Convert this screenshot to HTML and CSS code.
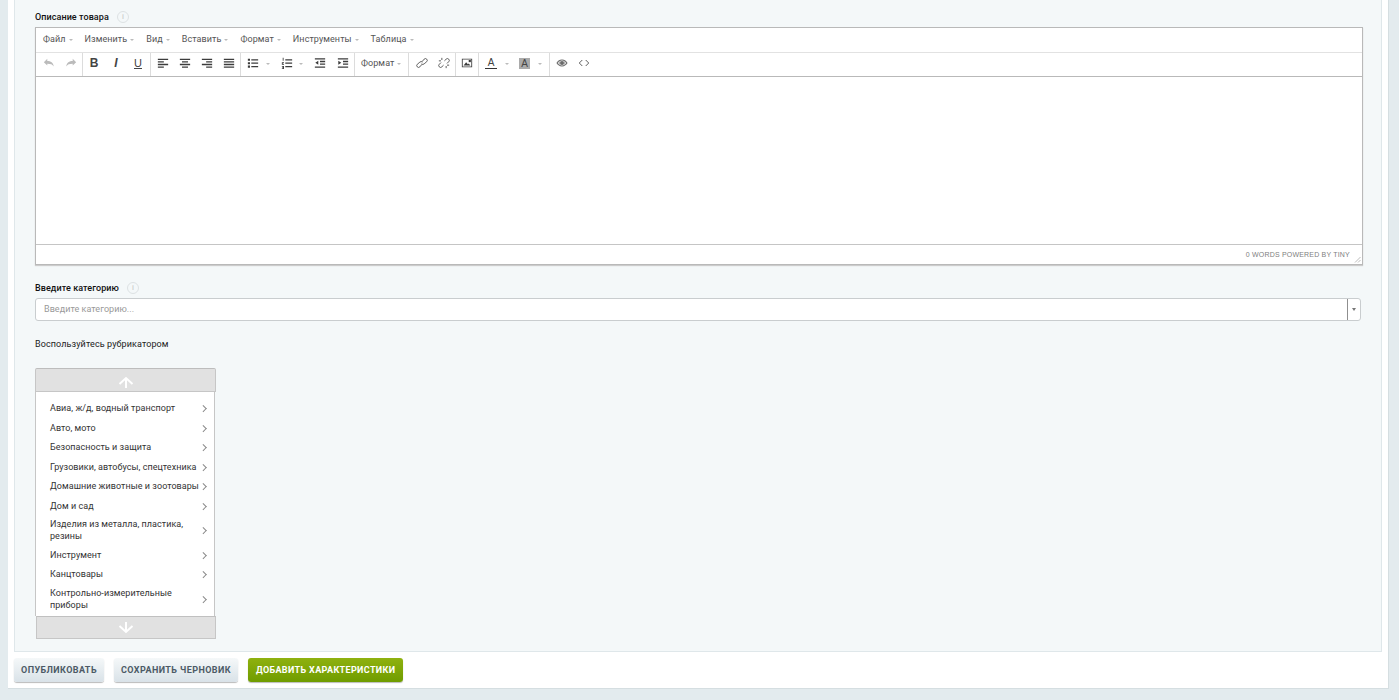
FILE: index.html
```html
<!DOCTYPE html>
<html lang="ru">
<head>
<meta charset="utf-8">
<title>Описание товара</title>
<link rel="stylesheet" href="styles.css">
</head>
<body>
<div class="sheet">
  <main class="panel">
    <div class="label-row first"><label class="label">Описание товара</label><span class="info">i</span></div>
    <div class="editor">
      <nav class="menubar">
        <span class="menu">Файл<i class="caret"></i></span>
        <span class="menu">Изменить<i class="caret"></i></span>
        <span class="menu">Вид<i class="caret"></i></span>
        <span class="menu">Вставить<i class="caret"></i></span>
        <span class="menu">Формат<i class="caret"></i></span>
        <span class="menu">Инструменты<i class="caret"></i></span>
        <span class="menu">Таблица<i class="caret"></i></span>
      </nav>
      <div class="toolbar">
        <div class="group g1">
          <svg class="ico dim" viewBox="0 0 14 14"><path d="M1 6l4-4v2.600c4 0 7 1.600 7.500 6.400-1.400-2.400-3.500-3.200-7.500-3.200V10z"/></svg>
          <svg class="ico dim" viewBox="0 0 14 14"><path d="M13 6L9 2v2.600C5 4.600 2 6.200 1.500 11c1.400-2.400 3.500-3.200 7.500-3.200V10z"/></svg>
        </div>
        <div class="group g2">
          <span class="tb bold">B</span>
          <span class="tb ital">I</span>
          <span class="tb under">U</span>
        </div>
        <div class="group g3">
          <svg class="ico" viewBox="0 0 14 14"><path d="M1 2h12v1.500H1zM1 5h7v1.500H1zM1 8h12v1.500H1zM1 11h7v1.500H1z"/></svg>
          <svg class="ico" viewBox="0 0 14 14"><path d="M1 2h12v1.500H1zM3.500 5h7v1.500h-7zM1 8h12v1.500H1zM3.500 11h7v1.500h-7z"/></svg>
          <svg class="ico" viewBox="0 0 14 14"><path d="M1 2h12v1.500H1zM6 5h7v1.500H6zM1 8h12v1.500H1zM6 11h7v1.500H6z"/></svg>
          <svg class="ico" viewBox="0 0 14 14"><path d="M1 2h12v1.500H1zM1 5h12v1.500H1zM1 8h12v1.500H1zM1 11h12v1.500H1z"/></svg>
        </div>
        <div class="group g4">
          <svg class="ico" viewBox="0 0 14 14"><path d="M1 2h2.500v2.500H1zM1 6h2.500v2.500H1zM1 10h2.500v2.500H1zM5 2.500h8V4H5zM5 6.500h8V8H5zM5 10.500h8V12H5z"/></svg>
          <i class="caret tool"></i>
          <svg class="ico" viewBox="0 0 14 14"><path d="M2 1h1v3.500H2zM1 6h2.500v1H2v1h1.500v1H1zM1 10.500h2.500V14H1v-.8h1.500v-.5h-1v-.7h1v-.6H1zM5 2.500h8V4H5zM5 6.500h8V8H5zM5 10.500h8V12H5z"/></svg>
          <i class="caret tool"></i>
          <svg class="ico" viewBox="0 0 14 14"><path d="M1 1.500h12V3H1zM7 4.500h6V6H7zM7 7.500h6V9H7zM1 11h12v1.500H1zM5 4.500V9L1.500 6.750z"/></svg>
          <svg class="ico" viewBox="0 0 14 14"><path d="M1 1.500h12V3H1zM7 4.500h6V6H7zM7 7.500h6V9H7zM1 11h12v1.500H1zM1.500 4.500V9L5 6.750z"/></svg>
        </div>
        <div class="group g5"><span class="menu">Формат<i class="caret"></i></span></div>
        <div class="group g6">
          <svg class="ico line" viewBox="0 0 14 14"><path d="M7 5.500l2.500-3a2.100 2.100 0 0 1 3 3L9.500 8a2.100 2.100 0 0 1-3 0M7 8.500l-2.500 3a2.100 2.100 0 0 1-3-3L4.500 6a2.100 2.100 0 0 1 3 0"/></svg>
          <svg class="ico line" viewBox="0 0 14 14"><path d="M7.500 4.500l2-2a2.100 2.100 0 0 1 3 3l-2 2M6.500 9.500l-2 2a2.100 2.100 0 0 1-3-3l2-2M4.500 1v2.500M1 4.500h2.500M9.500 13v-2.500M13 9.500h-2.500"/></svg>
        </div>
        <div class="group g7">
          <svg class="ico" viewBox="0 0 14 14"><path fill-rule="evenodd" d="M1 2h12v10H1zM2 3v8h10V3zM3 10l3-4 2 2.500 1-1 2 2.500z"/><path d="M9 3.500h2.500V6H9z"/></svg>
        </div>
        <div class="group g8">
          <span class="tb color">A</span><i class="caret swatch"></i>
          <span class="tb back">A</span><i class="caret swatch"></i>
        </div>
        <div class="group g9">
          <svg class="ico soft" viewBox="0 0 14 14"><path fill-rule="evenodd" d="M7 3c3 0 5.500 2 6.500 4-1 2-3.500 4-6.500 4S1.500 9 .5 7C1.500 5 4 3 7 3zM7 4.200C4.800 4.200 3 5.400 2 7c1 1.600 2.800 2.800 5 2.800S11 8.600 12 7c-1-1.600-2.800-2.800-5-2.800z"/><path d="M3 5.500h8v1H3zM3 7.500h8v1H3z"/><circle cx="7" cy="7" r="2.200"/></svg>
          <svg class="ico line" viewBox="0 0 14 14"><path d="M5 3.500L1.500 7 5 10.500M9 3.500L12.500 7 9 10.500"/></svg>
        </div>
      </div>
      <div class="edit-area"></div>
      <footer class="statusbar">
        <span class="status">0 WORDS POWERED BY TINY</span>
        <svg class="grip" viewBox="0 0 8 8"><path d="M7.500 2L2 7.500M7.500 5L5 7.500"/></svg>
      </footer>
    </div>

    <div class="label-row second"><label class="label">Введите категорию</label><span class="info">i</span></div>
    <div class="combo">
      <input class="combo-input" type="text" placeholder="Введите категорию...">
      <span class="combo-btn"><i class="combo-caret"></i></span>
    </div>

    <p class="hint">Воспользуйтесь рубрикатором</p>

    <div class="rubric">
      <div class="scroll up">
        <svg viewBox="0 0 16 12" class="arrow"><path d="M1.500 8L8 2l6.500 6M8 2v10"/></svg>
      </div>
      <ul class="cats">
        <li class="cat">Авиа, ж/д, водный транспорт</li>
        <li class="cat">Авто, мото</li>
        <li class="cat">Безопасность и защита</li>
        <li class="cat">Грузовики, автобусы, спецтехника</li>
        <li class="cat">Домашние животные и зоотовары</li>
        <li class="cat">Дом и сад</li>
        <li class="cat">Изделия из металла, пластика, резины</li>
        <li class="cat">Инструмент</li>
        <li class="cat">Канцтовары</li>
        <li class="cat">Контрольно-измерительные приборы</li>
      </ul>
      <div class="scroll down">
        <svg viewBox="0 0 16 12" class="arrow"><path d="M1.500 4L8 10l6.500-6M8 10V0"/></svg>
      </div>
    </div>
  </main>
  <div class="actions">
    <button class="btn" type="button">Опубликовать</button>
    <button class="btn" type="button">Сохранить черновик</button>
    <button class="btn green" type="button">Добавить характеристики</button>
  </div>
</div>
</body>
</html>
```
FILE: styles.css
```css
* { box-sizing: border-box; }
html, body { margin: 0; padding: 0; height: 700px; overflow: hidden; }
body { background: #e3ebee; font-family: Roboto, "Liberation Sans", sans-serif; color: #222; }
.sheet { margin: 0 10px 0 8px; height: 689px; background: #fff; padding: 0 6px; border-right: 1px solid #d5dee1; border-bottom: 1px solid #d5dee1; }
.panel { height: 652px; background: #f4f8f9; border: 1px solid #dfe7ea; border-top: 0; padding: 0 18px 0 20px; }
.label-row { display: flex; align-items: center; gap: 8px; height: 16px; }
.label-row.first { padding-top: 6px; height: 27px; }
.label-row.second { margin-top: 15px; }
.label { font-size: 9px; color: #111; font-weight: 500; letter-spacing: .08px; }
.info { width: 12px; height: 12px; border-radius: 50%; border: 1px solid #dde2e4; color: #c5c5c5; font-size: 8px; line-height: 10px; text-align: center; }

.editor { background: #fff; border: 1px solid #b9b9b9; box-shadow: 0 1px 1px #ccc; height: 238px; display: flex; flex-direction: column; }
.menubar { height: 25px; display: flex; align-items: center; padding: 0 0 2px 7px; gap: 12px; border-bottom: 1px solid #e2e2e2; }
.menu { font-size: 9px; color: #555; display: inline-flex; align-items: center; gap: 3px; letter-spacing: .08px; }
.caret { display: inline-block; width: 0; height: 0; border: 2.500px solid transparent; border-top: 2px solid #bbb; border-bottom: 0; margin-top: 2px; }
.toolbar { height: 24px; display: flex; border-bottom: 1px solid #b9b9b9; }
.group { display: flex; align-items: center; border-right: 1px solid #dcdcdc; padding: 0 0 3px; gap: 10px; }
.ico { width: 12px; height: 12px; fill: #3c3c3c; flex: none; }
.ico.dim { fill: #bbb; }
.ico.soft { fill: #6a6a6a; }
.ico.line { fill: none; stroke: #555; stroke-width: 1.100; }
.tb { font-size: 12px; color: #444; width: 12px; text-align: center; font-family: "Liberation Sans", sans-serif; }
.bold { font-weight: 700; }
.ital { font-style: italic; font-weight: 700; }
.under { text-decoration: underline; font-size: 11px; }
.caret.swatch { margin-left: -2px; }
.g1 { width: 47px; padding-left: 7px; }
.g2 { width: 68px; padding-left: 5px; }
.g3 { width: 90px; padding-left: 6px; }
.g4 { width: 114px; padding-left: 6px; gap: 11px; }
.g4 .caret.tool { margin-left: -4.500px; }
.g5 { width: 54px; padding-left: 6px; }
.g6 { width: 47px; padding-left: 7px; }
.g7 { width: 23px; padding-left: 5px; }
.g8 { width: 71px; padding-left: 6px; }
.g9 { border-right: 0; padding-left: 6px; }
.color { border-bottom: 1px solid #333; line-height: 11px; font-size: 10px; }
.back { background: #aaa; line-height: 11px; font-size: 10px; width: 11px; }
.edit-area { flex: 1; }
.statusbar { height: 20px; border-top: 1px solid #c5c5c5; display: flex; align-items: center; justify-content: flex-end; padding-right: 1px; gap: 3px; }
.status { font-family: "Liberation Sans", sans-serif; font-size: 7px; color: #808080; letter-spacing: .2px; }
.grip { width: 8px; height: 8px; fill: none; stroke: #bbb; stroke-width: 1; margin-top: 8px; }

.combo { display: flex; height: 23px; margin-top: 2px; width: 1326px; background: #fff; border: 1px solid #c9cdcf; border-radius: 3px; }
.combo-input { flex: 1; border: 0; outline: 0; background: transparent; padding: 0 8px 1px; font: 9px Roboto, sans-serif; letter-spacing: .05px; color: #888; }
.combo-input::placeholder { color: #999; opacity: 1; }
.combo-btn { width: 13px; border-left: 1px solid #8f8f8f; display: flex; align-items: center; justify-content: center; }
.combo-caret { width: 0; height: 0; border: 2.500px solid transparent; border-top: 3px solid #777; border-bottom: 0; }
.hint { font-size: 9px; color: #222; margin: 17px 0 0; line-height: 12px; letter-spacing: .11px; }

.rubric { width: 181px; margin-top: 18px; display: flex; flex-direction: column; }
.scroll { height: 24px; background: #e1e1e1; border: 1px solid #c6c6c6; display: flex; align-items: center; justify-content: center; flex: none; }
.scroll.up { border-top-color: #bdbdbd; border-radius: 2px 2px 0 0; padding-top: 3px; }
.scroll.down { margin-left: 1px; height: 23px; border-top-color: #c0c0c0; }
.arrow { width: 16px; height: 12px; fill: none; stroke: #fff; stroke-width: 2; }
.cats { list-style: none; margin: 0; padding: 6.500px 0 0; background: #fff; border-left: 1px solid #c6c6c6; border-right: 1px solid #c6c6c6; width: 180px; height: 224px; overflow: hidden; flex: none; }
.cat { position: relative; display: flex; align-items: center; min-height: 19.500px; font-size: 9px; line-height: 12px; color: #333; padding: 2.750px 13px 2.750px 14px; letter-spacing: .05px; }
.cat::after { content: ""; position: absolute; right: 9px; top: 50%; width: 3.500px; height: 3.500px; margin-top: -2px; border-top: 1px solid #888; border-right: 1px solid #888; transform: rotate(45deg); }
.actions { display: flex; gap: 10px; padding-top: 6px; }
.btn { height: 24px; border: 0; border-radius: 3px; padding: 0 7px; font: 700 9px Roboto, sans-serif; text-transform: uppercase; letter-spacing: .42px; color: #4c5a66; background: linear-gradient(#f5f8f9, #d9e2e8); box-shadow: 0 1px 1px #bbb; }
.btn.green { color: #fff; background: linear-gradient(#8fb10f, #6f9c00); padding: 0 8px; letter-spacing: .36px; }
```
